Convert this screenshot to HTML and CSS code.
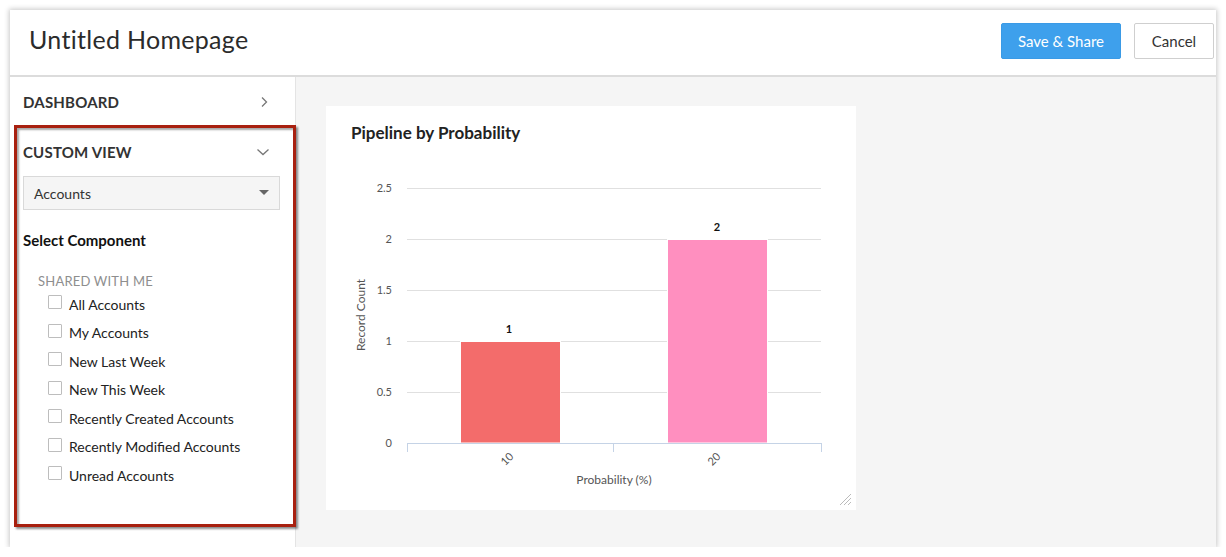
FILE: index.html
```html
<!DOCTYPE html>
<html>
<head>
<meta charset="utf-8">
<link rel="stylesheet" href="styles.css">
</head>
<body>
<div class="window">
  <header class="topbar">
    <h1 class="page-title">Untitled Homepage</h1>
    <div class="actions">
      <button class="btn btn-primary">Save &amp; Share</button>
      <button class="btn btn-default">Cancel</button>
    </div>
  </header>
  <div class="content">
    <aside class="sidebar">
      <div class="section-row dash-row">
        <span class="section-label">DASHBOARD</span>
        <svg class="chev" width="12" height="12" viewBox="0 0 12 12"><path d="M4 1.5 L8.5 6 L4 10.5" fill="none" stroke="#777" stroke-width="1.3"/></svg>
      </div>
      <div class="highlight">
        <div class="section-row cv-row">
          <span class="section-label">CUSTOM VIEW</span>
          <svg class="chev" width="14" height="10" viewBox="0 0 14 10"><path d="M1.5 2.5 L7 7.5 L12.5 2.5" fill="none" stroke="#777" stroke-width="1.3"/></svg>
        </div>
        <div class="select">
          <span>Accounts</span>
          <svg width="10" height="6" viewBox="0 0 10 6"><path d="M0 0 H10 L5 5 Z" fill="#666"/></svg>
        </div>
        <div class="subhead">Select Component</div>
        <div class="group-label">SHARED WITH ME</div>
        <ul class="checklist">
          <li><span class="cb"></span>All Accounts</li>
          <li><span class="cb"></span>My Accounts</li>
          <li><span class="cb"></span>New Last Week</li>
          <li><span class="cb"></span>New This Week</li>
          <li><span class="cb"></span>Recently Created Accounts</li>
          <li><span class="cb"></span>Recently Modified Accounts</li>
          <li><span class="cb"></span>Unread Accounts</li>
        </ul>
      </div>
    </aside>
    <main class="main">
      <div class="card">
        <div class="card-title">Pipeline by Probability</div>
        <svg class="chart" width="530" height="352" viewBox="0 0 530 352">
          <g stroke="#e0e0e0" stroke-width="1">
            <line x1="81" y1="30.5" x2="495" y2="30.5"/>
            <line x1="81" y1="81.5" x2="495" y2="81.5"/>
            <line x1="81" y1="132.5" x2="495" y2="132.5"/>
            <line x1="81" y1="183.5" x2="495" y2="183.5"/>
            <line x1="81" y1="234.5" x2="495" y2="234.5"/>
          </g>
          <g font-family="Lato, 'Open Sans', sans-serif" font-size="11" fill="#555" text-anchor="end">
            <text x="66" y="34">2.5</text>
            <text x="66" y="85">2</text>
            <text x="66" y="136">1.5</text>
            <text x="66" y="187">1</text>
            <text x="66" y="238">0.5</text>
            <text x="66" y="289">0</text>
          </g>
          <rect x="134.5" y="183.5" width="100" height="101.5" fill="#f36c6b" stroke="#fff" stroke-width="1"/>
          <rect x="341.5" y="81.5" width="100" height="203.5" fill="#ff8fbf" stroke="#fff" stroke-width="1"/>
          <g stroke="#c5d3e6" stroke-width="1">
            <line x1="81" y1="285.5" x2="495" y2="285.5"/>
            <line x1="81.5" y1="285" x2="81.5" y2="294"/>
            <line x1="287.5" y1="285" x2="287.5" y2="294"/>
            <line x1="495.5" y1="285" x2="495.5" y2="294"/>
          </g>
          <g font-family="Lato, 'Open Sans', sans-serif" font-size="11" font-weight="700" fill="#111" text-anchor="middle">
            <text x="183" y="175">1</text>
            <text x="391" y="73">2</text>
          </g>
          <g font-family="Lato, 'Open Sans', sans-serif" font-size="11" fill="#555" text-anchor="middle">
            <text transform="translate(181 301) rotate(-45)" y="4">10</text>
            <text transform="translate(388 301) rotate(-45)" y="4">20</text>
            <text x="288" y="326" font-size="12">Probability (%)</text>
            <text transform="translate(39 157) rotate(-90)" font-size="12">Record Count</text>
          </g>
          <g stroke="#bbb" stroke-width="1">
            <line x1="514" y1="347" x2="525" y2="336"/>
            <line x1="518" y1="347" x2="525" y2="340"/>
            <line x1="522" y1="347" x2="525" y2="344"/>
          </g>
        </svg>
      </div>
    </main>
  </div>
</div>
</body>
</html>
```

FILE: styles.css
```css
* { box-sizing: border-box; }
html, body { margin: 0; padding: 0; background: #ffffff; }
body { font-family: Lato, "Open Sans", Arial, sans-serif; color: #333; }

.window {
  margin: 10px 0 0 10px;
  width: 1206px;
  height: 537px;
  background: #fff;
  box-shadow: 0 0 5px 1px rgba(0,0,0,0.22);
  display: flex;
  flex-direction: column;
  overflow: hidden;
}

.topbar {
  height: 67px;
  flex: 0 0 67px;
  border-bottom: 2px solid #dcdcdc;
  display: flex;
  align-items: center;
  justify-content: space-between;
  padding: 0 2px 0 19px;
}
.page-title {
  margin: 0;
  font-weight: 400;
  font-size: 25px;
  color: #2b2b2b;
  letter-spacing: 0.3px;
  position: relative;
  top: -4px;
}
.actions { display: flex; gap: 13px; align-items: center; margin-bottom: 4px; }
.btn {
  height: 36px;
  font-family: Lato, "Open Sans", Arial, sans-serif;
  font-size: 15px;
  border-radius: 2px;
  cursor: pointer;
}
.btn-primary {
  width: 120px;
  background: #3ea0ec;
  border: 1px solid #3a9ae6;
  color: #fff;
}
.btn-default {
  width: 80px;
  background: #fff;
  border: 1px solid #cfcfcf;
  color: #333;
}

.content { flex: 1; display: flex; min-height: 0; }

.sidebar {
  width: 286px;
  flex: 0 0 286px;
  border-right: 1px solid #e4e4e4;
  background: #fff;
}
.section-row {
  display: flex;
  align-items: center;
  justify-content: space-between;
}
.section-label {
  font-size: 15px;
  font-weight: 700;
  color: #333;
  letter-spacing: 0.2px;
}
.dash-row {
  height: 48px;
  padding: 2px 25px 0 13px;
}
.highlight {
  margin-left: 4px;
  width: 282px;
  height: 402px;
  border: 3px solid #a8200f;
  box-shadow: 2px 2px 2px rgba(0,0,0,0.45), inset 2px 2px 2px rgba(0,0,0,0.35);
  padding: 0 13px 0 6px;
  position: relative;
}
.cv-row {
  height: 48px;
  padding: 0 10px 0 0;
}
.select {
  height: 34px;
  background: #f5f5f5;
  border: 1px solid #d9d9d9;
  display: flex;
  align-items: center;
  justify-content: space-between;
  padding: 0 10px 0 10px;
  font-size: 14px;
  color: #333;
}
.subhead {
  margin-top: 21px;
  font-size: 15px;
  font-weight: 700;
  color: #111;
}
.group-label {
  margin-top: 24px;
  padding-left: 15px;
  font-size: 13px;
  color: #8e8e8e;
  letter-spacing: 0.2px;
}
.checklist {
  list-style: none;
  margin: 1px 0 0 0;
  padding: 0 0 0 25px;
}
.checklist li {
  height: 28.5px;
  display: flex;
  align-items: center;
  font-size: 14px;
  color: #222;
}
.cb {
  width: 14px;
  height: 14px;
  border: 1px solid #bdbdbd;
  border-radius: 1px;
  background: #fff;
  margin-right: 7px;
  position: relative;
  top: -2px;
}

.main {
  flex: 1;
  background: #f5f5f5;
  padding: 29px 0 0 30px;
}
.card {
  width: 530px;
  height: 404px;
  background: #fff;
}
.card-title {
  height: 52px;
  padding: 16px 0 0 25px;
  font-size: 17px;
  font-weight: 700;
  color: #222;
}
.chart { display: block; }
```
